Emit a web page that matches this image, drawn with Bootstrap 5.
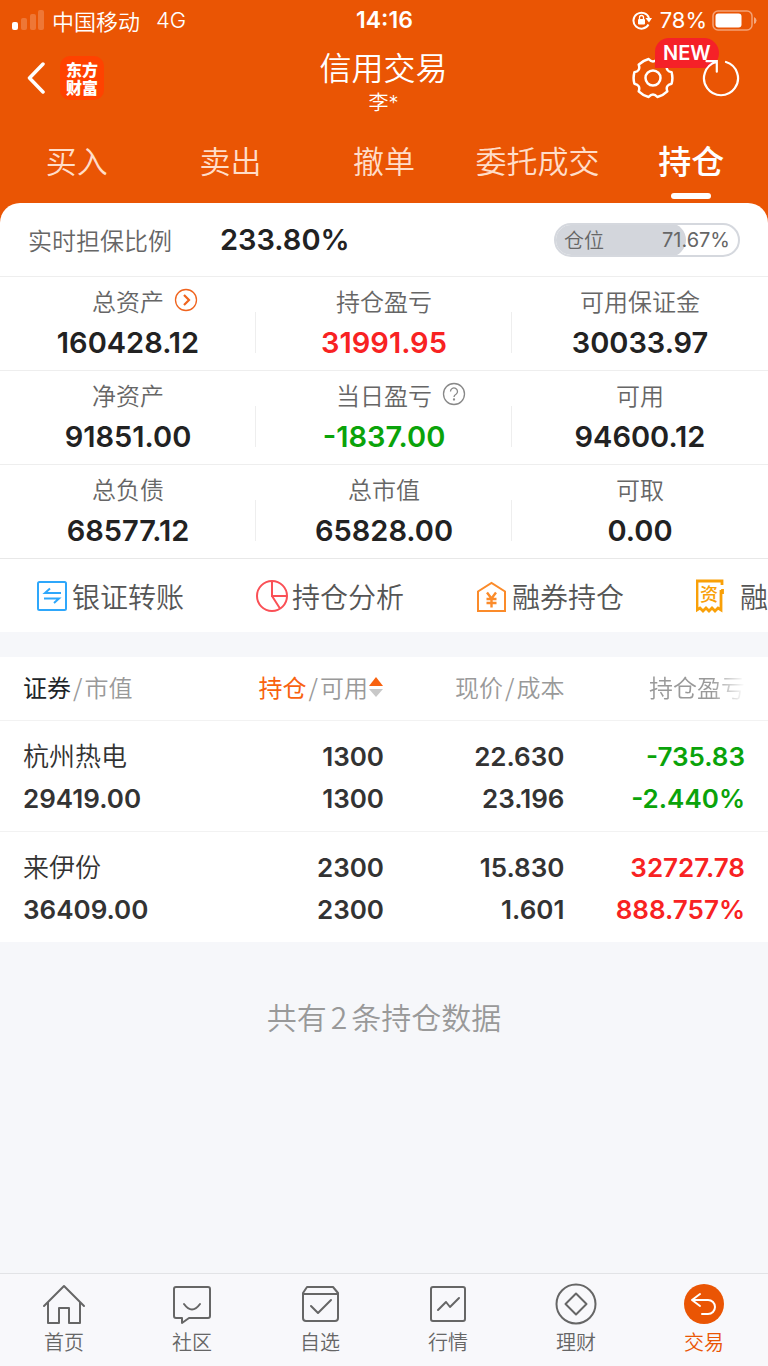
<!DOCTYPE html>
<html lang="zh-CN">
<head>
<meta charset="utf-8">
<meta name="viewport" content="width=device-width, initial-scale=1">
<title>信用交易</title>
<link href="https://cdn.jsdelivr.net/npm/bootstrap@5.3.0/dist/css/bootstrap.min.css" rel="stylesheet">
<style>
  :root { --brand: #ea5504; --ink: #222; --muted: #666; --soft: #999; --up: #f82222; --down: #0aa30a; --page: #f6f7fa; }
  body { font-family: Inter, "Noto Sans CJK SC", sans-serif; background: var(--page); color: var(--ink); line-height: 36px; }
  svg { display: block; fill: none; flex: none; }
  button { background: none; border: 0; padding: 0; color: inherit; }
  a { text-decoration: none; color: inherit; }
  .cjk { font-family: "Noto Sans CJK SC", sans-serif; font-weight: 350; }
  .latin { font-family: Inter, sans-serif; }
  .app-top { background: var(--brand); color: #fff; padding-bottom: 20px; }
  .status-row { display: grid; grid-template-columns: 1fr auto 1fr; height: 39px; font-size: 22px; padding: 0 11px 0 12px; }
  .clock { font-weight: 600; font-size: 23px; }
  .title-row { display: grid; grid-template-columns: 1fr auto 1fr; height: 85px; padding: 0 28px 0 27px; }
  .title-row h1 { font-size: 32px; line-height: 44px; margin: 5px 0 2px; }
  .title-row p { font-size: 20px; line-height: 24px; margin: 0; }
  .brand-mark { width: 44px; height: 44px; border-radius: 10px; background: #ff4200; font: 900 16px/18px "Noto Sans CJK SC", sans-serif; margin-left: 15px; }
  .new-tag { position: absolute; left: 23px; top: -19px; height: 30px; padding: 0 8px; border-radius: 14px 15px 15px 0; background: #f52128; font-size: 20px; line-height: 30px; font-weight: 600; }
  .over { position: relative; z-index: 1; }
  .tab-row a { font-size: 31px; line-height: 46px; color: #ffddc9; padding: 13px 0 20px; position: relative; white-space: nowrap; }
  .tab-row a.active { color: #fff; font-weight: 500; font-size: 33px; }
  .tab-row a.active::after { content: ""; position: absolute; left: 50%; margin-left: -20px; bottom: 4px; width: 40px; height: 6px; border-radius: 3px; background: #fff; }
  .sheet { background: #fff; border-radius: 20px 20px 0 0; margin-top: -20px; }
  .ratio-row { padding: 0 28px; height: 73px; }
  .ratio-row .name { font-size: 24px; color: var(--muted); }
  .big-num { font-size: 29px; font-weight: 600; }
  .usage { width: 186px; height: 34px; border-radius: 17px; border: 2px solid #d5d8de; position: relative; overflow: hidden; font-size: 20px; line-height: 30px; color: var(--muted); padding: 0 8px; }
  .usage .fill { position: absolute; left: -2px; top: -2px; bottom: -2px; background: #d3d6dc; border-radius: 17px; }
  .usage span { position: relative; }
  .stat-row { border-top: 1px solid #eee; padding: 7px 0; }
  .stat-cell { position: relative; text-align: center; line-height: 34px; }
  .stat-cell .big-num { line-height: 40px; padding-top: 5px; }
  .stat-cell + .stat-cell::before { content: ""; position: absolute; left: -1px; top: 28px; height: 41px; border-left: 1px solid #eee; }
  .stat-cell .name { font-size: 24px; color: var(--muted); position: relative; display: inline-block; vertical-align: top; }
  .stat-cell .name button { position: absolute; left: 100%; top: 0; margin: 4px 0 0 10px; }
  .up { color: var(--up) !important; } .down { color: var(--down) !important; }
  .tools { border-top: 1px solid #e8e8e8; height: 74px; overflow: hidden; font-size: 28px; color: #555; padding-left: 36px; }
  .tools a { flex: 0 0 220px; white-space: nowrap; }
  .holdings { background: #fff; margin-top: 25px; table-layout: fixed; width: 100%; }
  .holdings th, .holdings td { text-align: right; padding: 0; border-bottom: 1px solid #f2f2f2; white-space: nowrap; }
  .holdings th:first-child, .holdings td:first-child { text-align: left; padding-left: 23px; }
  .holdings th:last-child, .holdings td:last-child { padding-right: 23px; }
  .holdings th { font-size: 24px; height: 63px; color: var(--soft); font-weight: 350; padding-bottom: 3px; }
  .holdings td { font-size: 26px; font-weight: 600; line-height: 42px; padding: 15px 0 11px; color: #333; }
  .holdings tbody tr:last-child td { border: 0; }
  .holdings .stock { font-weight: 350; }
  .slash { margin: 0 2px; }
  .fade-out-text { -webkit-mask-image: linear-gradient(90deg, #000 65%, transparent); mask-image: linear-gradient(90deg, #000 65%, transparent); display: inline-block; vertical-align: top; }
  .total-note { font-size: 30px; color: var(--soft); padding-top: 56px; }
  .dock { border-top: 1px solid #e2e3e6; background: #f8f8fb; color: var(--muted); height: 93px; font-size: 20px; line-height: 32px; padding-top: 8px; }
  .dock svg { stroke: #666; stroke-width: 2; stroke-linejoin: round; stroke-linecap: round; }
</style>
</head>
<body>
<div class="d-flex flex-column min-vh-100">
  <header class="app-top">
    <div class="status-row align-items-center">
      <div class="d-flex align-items-center cjk">
        <svg width="32" height="20"><g fill="#fff"><rect y="12" width="6" height="8" rx="2"/><g opacity=".2"><rect x="9" y="8" width="6" height="12" rx="2"/><rect x="18" y="4" width="6" height="16" rx="2"/><rect x="26" width="6" height="20" rx="2"/></g></g></svg>
        <span class="ms-2">中国移动</span><span class="ms-3 latin">4G</span>
      </div>
      <div class="clock">14:16</div>
      <div class="d-flex align-items-center justify-content-end">
        <svg class="me-2" width="20" height="20" viewBox="0 0 20 20" stroke="#fff" stroke-width="2"><path d="M16.500 14.500A8 8 0 1 1 17 8"/><path d="M13.500 8h6.500l-3 4.500z" fill="#fff" stroke="none"/><rect x="6" y="9" width="7" height="5.500" rx="1" fill="#fff" stroke="none"/><path d="M7.500 9V7.500a2 2 0 0 1 4 0V9" stroke-width="1.300"/></svg>
        <span>78%</span>
        <svg class="ms-1" width="46" height="22" viewBox="0 0 46 22"><rect x="2" y="2" width="39" height="19" rx="5" stroke="#fff" stroke-opacity=".45" stroke-width="1.500"/><rect x="4.500" y="4.500" width="26" height="14" rx="3" fill="#fff"/><path d="M43 8v7q2.500-1 2.500-3.500T43 8" fill="#fff" opacity=".5"/></svg>
      </div>
    </div>
    <div class="title-row">
      <div class="d-flex align-items-center pb-2">
        <button type="button" aria-label="返回"><svg width="18" height="32" viewBox="0 0 18 32" stroke="#fff" stroke-width="3.500" stroke-linecap="round" stroke-linejoin="round"><path d="M16 2 2.500 16 16 30"/></svg></button>
        <div class="brand-mark d-flex flex-column align-items-center justify-content-center"><span>东方</span><span>财富</span></div>
      </div>
      <div class="text-center">
        <h1 class="cjk">信用交易</h1>
        <p class="cjk">李<span class="latin">*</span></p>
      </div>
      <div class="d-flex align-items-center justify-content-end gap-4 pb-2">
        <button type="button" class="position-relative" aria-label="设置"><svg width="42" height="42" viewBox="-21 -21 42 42" stroke="#fff" stroke-width="2.500" stroke-linejoin="round"><path d="M18.600-5.700Q20.200 0 18.600 5.700Q12.100 7 14.300 13.300Q10.100 17.500 4.400 19Q0 14-4.400 19Q-10.100 17.500-14.300 13.300Q-12.100 7-18.600 5.700Q-20.200 0-18.600-5.700Q-12.100-7-14.300-13.300Q-10.100-17.500-4.400-19Q0-14 4.400-19Q10.100-17.500 14.300-13.300Q12.100-7 18.600-5.700Z"/><circle r="7.500"/></svg><span class="new-tag">NEW</span></button>
        <button type="button" class="over ms-1" aria-label="刷新"><svg width="38" height="38" viewBox="0 0 38 38" stroke="#fff" stroke-width="2.200" stroke-linecap="round"><path d="M24 3A17 17 0 1 1 14 3M4.500 2.200h10.300v10.500"/></svg></button>
      </div>
    </div>
    <nav class="tab-row row g-0 text-center cjk">
      <a class="col" href="#">买入</a><a class="col" href="#">卖出</a><a class="col" href="#">撤单</a><a class="col" href="#">委托成交</a><a class="col active" href="#">持仓</a>
    </nav>
  </header>

  <main>
    <section class="sheet">
      <div class="ratio-row d-flex align-items-center">
        <span class="name cjk">实时担保比例</span>
        <span class="big-num ms-5">233.80%</span>
        <div class="usage d-flex justify-content-between ms-auto"><div class="fill" style="width:72.5%"></div><span class="cjk">仓位</span><span>71.67%</span></div>
      </div>
      <div class="stat-row row g-0">
        <div class="col-4 stat-cell"><div class="name cjk">总资产<button type="button" aria-label="详情"><svg width="24" height="24" viewBox="0 0 24 24" stroke="#f0641e"><circle cx="12" cy="12" r="10.500" stroke-width="1.300"/><path d="m10 7 5 5-5 5" stroke-width="2.200"/></svg></button></div><div class="big-num">160428.12</div></div>
        <div class="col-4 stat-cell"><div class="name cjk">持仓盈亏</div><div class="big-num up">31991.95</div></div>
        <div class="col-4 stat-cell"><div class="name cjk">可用保证金</div><div class="big-num">30033.97</div></div>
      </div>
      <div class="stat-row row g-0">
        <div class="col-4 stat-cell"><div class="name cjk">净资产</div><div class="big-num">91851.00</div></div>
        <div class="col-4 stat-cell"><div class="name cjk">当日盈亏<button type="button" aria-label="说明"><svg width="24" height="24" viewBox="0 0 24 24" stroke="#888" stroke-width="1.300"><circle cx="12" cy="12" r="10.500"/><path d="M8.500 9.500a3.500 3.500 0 1 1 5.500 2.800q-2 1.200-2 2.700"/><circle cx="12" cy="17.500" r=".5"/></svg></button></div><div class="big-num down">-1837.00</div></div>
        <div class="col-4 stat-cell"><div class="name cjk">可用</div><div class="big-num">94600.12</div></div>
      </div>
      <div class="stat-row row g-0">
        <div class="col-4 stat-cell"><div class="name cjk">总负债</div><div class="big-num">68577.12</div></div>
        <div class="col-4 stat-cell"><div class="name cjk">总市值</div><div class="big-num">65828.00</div></div>
        <div class="col-4 stat-cell"><div class="name cjk">可取</div><div class="big-num">0.00</div></div>
      </div>
      <nav class="tools d-flex align-items-center cjk">
        <a href="#" class="d-flex align-items-center gap-1"><svg width="32" height="32" viewBox="0 0 32 32" stroke="#2ea7fb" stroke-width="2"><rect x="2" y="2" width="28" height="28" rx="1.500"/><path d="M25 13H9l5-4.500M8 18.500h15l-5 4.500"/></svg>银证转账</a>
        <a href="#" class="d-flex align-items-center gap-1"><svg width="32" height="32" viewBox="0 0 32 32" stroke="#fa5056" stroke-width="2"><circle cx="16" cy="16" r="15"/><path d="M16 1v15h15M16 16l8 12.500"/></svg>持仓分析</a>
        <a href="#" class="d-flex align-items-center gap-1"><svg width="32" height="32" viewBox="0 0 32 32" stroke="#fb8b2a" stroke-width="2"><path d="M2 31V11.500L15.500 3 29 11.500V31z"/><path d="m11 12.500 4.500 6 4.500-6M15.500 18.500v9M10.500 19h10M10.500 23h10" stroke-width="2.400"/></svg>融券持仓</a>
        <a href="#" class="d-flex align-items-center gap-3"><svg width="28" height="36" viewBox="2 0 28 36" stroke="#f9a008" stroke-width="2.800"><path d="M28 7V3H3v29l3-2 3 3 3-3 3 3 3-3 3 3 3-3 3 2V12M28.500 11v5"/><text x="6" y="23" font-size="18" font-weight="500" fill="#f9a008" stroke="none">资</text></svg>融资持仓</a>
      </nav>
    </section>

    <table class="holdings">
      <colgroup><col style="width:26.5%"><col style="width:23.5%"><col style="width:23.5%"><col style="width:26.5%"></colgroup>
      <thead class="cjk"><tr>
        <th scope="col"><span class="text-dark fw-normal">证券</span><span class="slash">/</span>市值</th>
        <th scope="col"><div class="d-flex align-items-center justify-content-end"><span class="fw-normal" style="color:#f8620f">持仓</span><span class="slash">/</span>可用<svg width="16" height="22" viewBox="0 0 16 22"><path d="m8 1 7 9H1z" fill="#f8620f"/><path d="m8 21 7-8H1z" fill="#c8c8c8"/></svg></div></th>
        <th scope="col">现价<span class="slash">/</span>成本</th>
        <th scope="col"><span class="fade-out-text">持仓盈亏</span></th>
      </tr></thead>
      <tbody>
        <tr><td><div class="stock">杭州热电</div>29419.00</td><td>1300<br>1300</td><td>22.630<br>23.196</td><td class="down">-735.83<br>-2.440%</td></tr>
        <tr><td><div class="stock">来伊份</div>36409.00</td><td>2300<br>2300</td><td>15.830<br>1.601</td><td class="up">32727.78<br>888.757%</td></tr>
      </tbody>
    </table>
    <p class="total-note text-center cjk mb-0">共有<span class="mx-1">2</span>条持仓数据</p>
  </main>

  <nav class="dock row g-0 text-center mt-auto cjk">
    <a class="col d-flex flex-column align-items-center" href="#"><svg width="44" height="44" viewBox="0 0 44 44"><path d="M2 24 22 4l20 20M6 20v21h11V26h10v15h11V20"/></svg>首页</a>
    <a class="col d-flex flex-column align-items-center" href="#"><svg width="44" height="44" viewBox="0 0 44 44"><path d="M6 5h32q2 0 2 2v27q0 2-2 2H19l-7 5v-5H6q-2 0-2-2V7q0-2 2-2M14 22q8 11 16 0"/></svg>社区</a>
    <a class="col d-flex flex-column align-items-center" href="#"><svg width="44" height="44" viewBox="0 0 44 44"><path d="M9 5h26l5 6v25q0 3-3 3H8q-3 0-3-3V11zM5 12h35M13 24l7 7 13-13"/></svg>自选</a>
    <a class="col d-flex flex-column align-items-center" href="#"><svg width="44" height="44" viewBox="0 0 44 44"><rect x="5" y="5" width="34" height="34" rx="2"/><path d="m12 28 8-8 4 5 9-9"/></svg>行情</a>
    <a class="col d-flex flex-column align-items-center" href="#"><svg width="44" height="44" viewBox="0 0 44 44"><circle cx="22" cy="22" r="19.500"/><path d="M22 11.500 32.500 22 22 32.500 11.500 22z"/></svg>理财</a>
    <a class="col d-flex flex-column align-items-center" href="#" style="color:var(--brand)"><svg width="44" height="44" viewBox="0 0 44 44"><circle cx="22" cy="22" r="20" fill="#ea5504" stroke="none"/><path d="m18 12-8 6 8 6M10 18h16a7 7 0 0 1 0 14h-6" stroke="#fff"/></svg>交易</a>
  </nav>
</div>
<script src="https://cdn.jsdelivr.net/npm/bootstrap@5.3.0/dist/js/bootstrap.bundle.min.js"></script>
</body>
</html>
